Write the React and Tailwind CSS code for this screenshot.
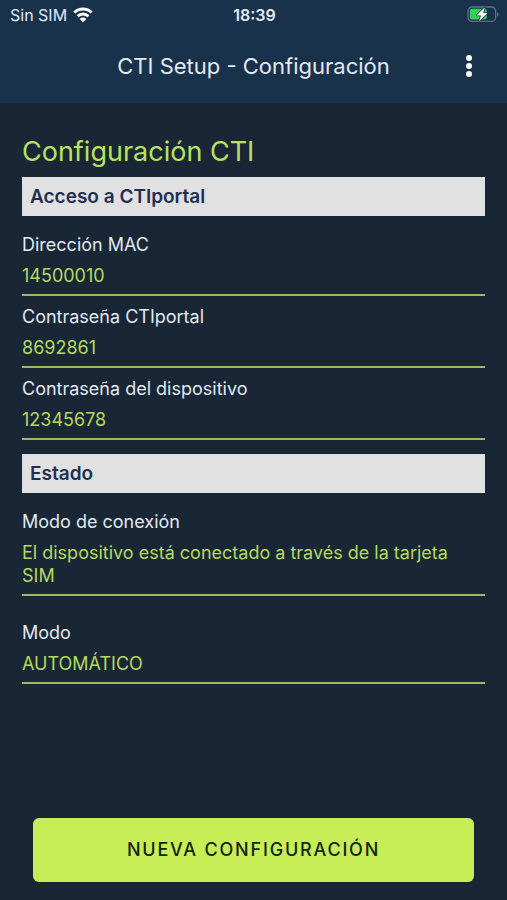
import React from "react";

function WifiIcon() {
  return (
    <svg className="h-4 w-5" viewBox="0 0 20 16" fill="none" stroke="#fff" strokeWidth="3" aria-hidden="true">
      <path d="M1.300 5.500a12.400 12.400 0 0 1 17.400 0" />
      <path d="M4.600 9.200a7.700 7.700 0 0 1 10.800 0" />
      <path d="M10 15.200 6.700 12a4.600 4.600 0 0 1 6.600 0Z" fill="#fff" stroke="none" />
    </svg>
  );
}

function BatteryIcon() {
  return (
    <svg className="h-[18px] w-8" viewBox="0 0 32 18" fill="none" role="img" aria-label="Batería cargando">
      <rect x="1" y="1" width="27.600" height="14.400" rx="4" stroke="#5c7186" strokeWidth="1.300" />
      <path d="M30 6.200v4.400c1-.4 1.500-1.200 1.500-2.200s-.5-1.800-1.500-2.200Z" fill="#5c7186" />
      <rect x="2.800" y="2.800" width="17" height="10.800" rx="2.400" fill="#34d158" />
      <path
        d="M17.300 1.800 10.200 8.800a.4.4 0 0 0 .3.700h3.600l-1.800 4.900c-.1.400.3.600.6.300l7-7a.4.4 0 0 0-.3-.7h-3.500l1.700-4.900c.1-.4-.2-.6-.5-.3Z"
        fill="#fff"
        stroke="#19324c"
        strokeWidth="1.600"
        paintOrder="stroke"
      />
    </svg>
  );
}

function MenuDots() {
  return (
    <svg className="h-6 w-2" viewBox="0 0 8 24" fill="#fff" aria-hidden="true">
      <circle cx="4" cy="3" r="3" />
      <circle cx="4" cy="11" r="3" />
      <circle cx="4" cy="19" r="3" />
    </svg>
  );
}

function SectionTitle({ children }) {
  return (
    <h2 className="bg-[#e1e1e2] px-2 py-2 text-[19px] leading-[23px] font-semibold text-[#1f2f50]">{children}</h2>
  );
}

function Field({ label, value }) {
  return (
    <div className="flex flex-col gap-2 border-b-2 border-[#9cbb68] pt-[9px] pb-[7px] text-lg leading-[23px]">
      <dt className="text-[#e3e9f1]">{label}</dt>
      <dd className="text-[#b4da60]">{value}</dd>
    </div>
  );
}

export default function App() {
  return (
    <div className="flex min-h-screen flex-col bg-[#182635] font-['Inter','Noto_Sans',sans-serif]">
      <header className="bg-[#19324c] text-[#e3e9f1]">
        <div className="grid h-[30px] grid-cols-3 items-center pr-2 pl-[10px] text-base">
          <div className="flex items-center gap-1.5">
            <span>Sin SIM</span>
            <WifiIcon />
          </div>
          <span className="text-center font-semibold">18:39</span>
          <div className="flex justify-end">
            <BatteryIcon />
          </div>
        </div>
        <div className="grid h-[73px] grid-cols-[56px_1fr_56px] items-center px-[10px]">
          <h1 className="col-start-2 text-center text-[22px]">CTI Setup - Configuración</h1>
          <button type="button" aria-label="Más opciones" className="flex h-12 items-center justify-center">
            <MenuDots />
          </button>
        </div>
      </header>

      <main className="flex flex-1 flex-col px-[22px] pt-8 pb-[18px]">
        <h2 className="text-[27px] leading-[34px] text-[#b9e35e]">Configuración CTI</h2>
        <section className="mt-2">
          <SectionTitle>Acceso a CTIportal</SectionTitle>
          <dl className="mt-2">
            <Field label="Dirección MAC" value="14500010" />
            <Field label="Contraseña CTIportal" value="8692861" />
            <Field label="Contraseña del dispositivo" value="12345678" />
          </dl>
        </section>
        <section className="mt-3.5">
          <SectionTitle>Estado</SectionTitle>
          <dl className="mt-2 flex flex-col gap-4">
            <Field label="Modo de conexión" value="El dispositivo está conectado a través de la tarjeta SIM" />
            <Field label="Modo" value="AUTOMÁTICO" />
          </dl>
        </section>
        <div className="mt-auto px-[11px] pt-8">
          <button
            type="button"
            className="h-16 w-full rounded-md bg-[#c8ee57] text-lg font-medium tracking-widest text-[#142410]"
          >
            NUEVA CONFIGURACIÓN
          </button>
        </div>
      </main>
    </div>
  );
}
